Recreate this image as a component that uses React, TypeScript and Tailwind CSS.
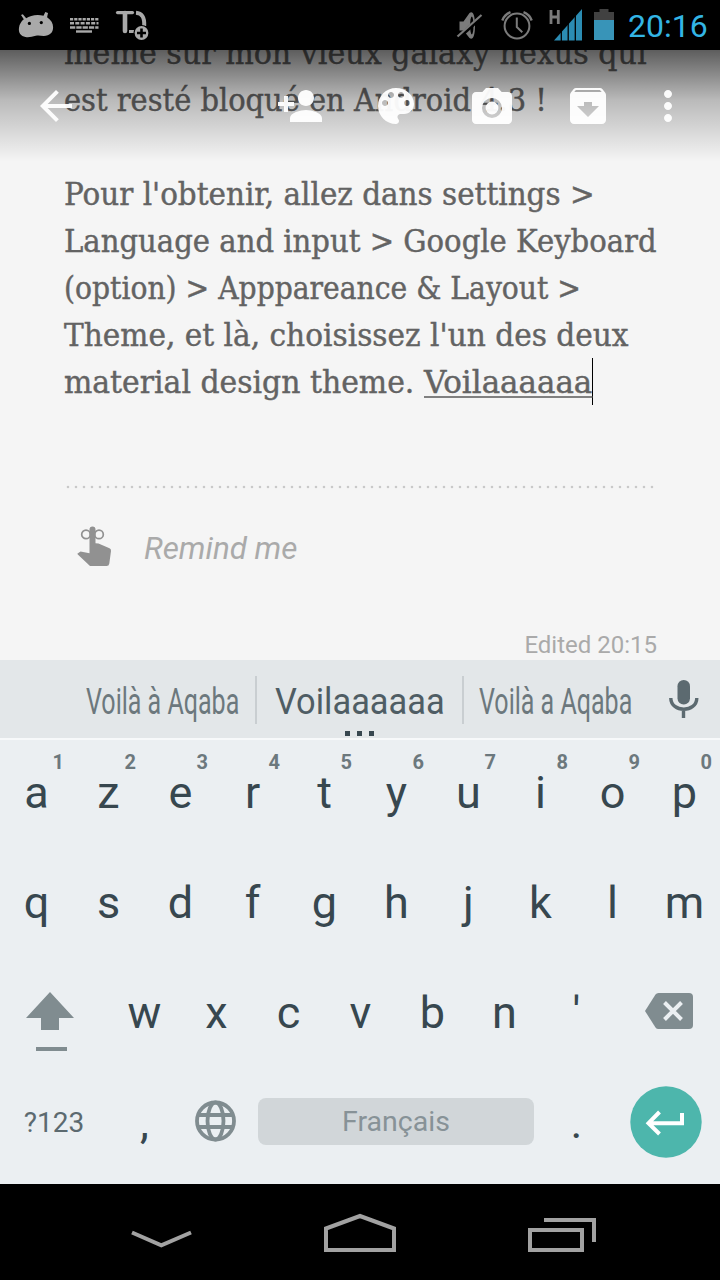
import type { ReactNode } from 'react';

function MdIcon({ d, className }: { d: string; className: string }) {
  return (
    <svg viewBox="0 0 24 24" className={className} fill="currentColor" fillRule="evenodd">
      <path d={d} />
    </svg>
  );
}

const ICONS = {
  back: 'M20 11H7.83l5.59-5.59L12 4l-8 8 8 8 1.41-1.41L7.83 13H20v-2z',
  personAdd:
    'M15 12c2.21 0 4-1.79 4-4s-1.79-4-4-4-4 1.79-4 4 1.79 4 4 4zm-9-2V7H4v3H1v2h3v3h2v-3h3v-2H6zm9 4c-2.67 0-8 1.34-8 4v2h16v-2c0-2.66-5.33-4-8-4z',
  palette:
    'M12 3c-4.97 0-9 4.03-9 9s4.03 9 9 9c.83 0 1.5-.67 1.5-1.5 0-.39-.15-.74-.39-1.01-.23-.26-.38-.61-.38-.99 0-.83.67-1.5 1.5-1.5H16c2.76 0 5-2.24 5-5 0-4.42-4.03-8-9-8zm-5.5 9c-.83 0-1.5-.67-1.5-1.5S5.67 9 6.5 9 8 9.67 8 10.5 7.33 12 6.5 12zm3-4C8.67 8 8 7.33 8 6.5S8.67 5 9.5 5s1.5.67 1.5 1.5S10.33 8 9.5 8zm5 0c-.83 0-1.5-.67-1.5-1.5S13.67 5 14.5 5s1.5.67 1.5 1.5S15.33 8 14.5 8zm3 4c-.83 0-1.5-.67-1.5-1.5S16.67 9 17.5 9s1.5.67 1.5 1.5-.67 1.5-1.5 1.5z',
  camera:
    'M9 3L7.17 5H4c-1.1 0-2 .9-2 2v12c0 1.1.9 2 2 2h16c1.1 0 2-.9 2-2V7c0-1.1-.9-2-2-2h-3.17L15 3H9zm3 15a5 5 0 1 1 0-10 5 5 0 0 1 0 10zM12 9.8a3.2 3.2 0 1 0 0 6.4 3.2 3.2 0 0 0 0-6.4z',
  archive:
    'M20.54 5.23l-1.39-1.68C18.88 3.21 18.47 3 18 3H6c-.47 0-.88.21-1.16.55L3.46 5.23C3.17 5.57 3 6.02 3 6.5V19c0 1.1.9 2 2 2h14c1.1 0 2-.9 2-2V6.5c0-.48-.17-.93-.46-1.27zM12 17.5L6.5 12H10v-2h4v2h3.5L12 17.5zM5.12 5l.81-1h12l.94 1H5.12z',
  more: 'M12 8c1.1 0 2-.9 2-2s-.9-2-2-2-2 .9-2 2 .9 2 2 2zm0 2c-1.1 0-2 .9-2 2s.9 2 2 2 2-.9 2-2-.9-2-2-2zm0 6c-1.1 0-2 .9-2 2s.9 2 2 2 2-.9 2-2-.9-2-2-2z',
};

function StatusBar() {
  return (
    <header className="flex h-[50px] shrink-0 items-start bg-black">
      <svg viewBox="0 0 240 50" className="h-[50px] w-[240px]">
        <g fill="#a9a9a9">
          <path d="M21 15l1.800-.8 3.400 4C30 15.500 37 14 43.500 15.700l1.800-3.700 2.700 1-.9 4.300c4 2.700 6 6 6 10.200 0 5.200-3.500 8.300-9.300 8.400-3 0-5.200-.7-8-.1-3.800.8-6.500 2-10.300 1.300-4.600-.9-7.300-4.300-6.500-9.300.4-3.300 2-6.200 4.800-8.500z" />
          <circle cx="29.400" cy="23.400" r="1.600" fill="#000" />
          <circle cx="41.300" cy="22.600" r="1.600" fill="#000" />
        </g>
        <g stroke="#a9a9a9" strokeWidth="2.400" fill="none">
          <path d="M70 19.200H98.500" strokeDasharray="3.200 1" />
          <path d="M70 23.300H98.500" strokeDasharray="4 1.300" />
          <path d="M70 27.500H98.500" strokeDasharray="5.300 1" />
          <path d="M76 31.500H92" />
        </g>
        <g fill="none" stroke="#a9a9a9" strokeLinecap="round">
          <path d="M117.500 12.600H132.500" strokeWidth="3.200" />
          <path d="M125 13V31" strokeWidth="4.600" />
          <path d="M136 12.800C142.500 13.200 144.600 17.500 144.200 26" strokeWidth="4" strokeLinecap="butt" />
          <path d="M129 31.500H134" strokeWidth="3" strokeLinecap="butt" />
        </g>
        <circle cx="141.500" cy="33" r="8" fill="#000" />
        <circle cx="141.500" cy="33" r="6.900" fill="#a9a9a9" />
        <path d="M137 33H146M141.500 28.500V37.500" stroke="#000" strokeWidth="2.600" />
      </svg>
      <svg viewBox="440 0 180 50" className="ml-auto h-[50px] w-[180px]">
        <path d="M459.500 21.500h4l6-8.500c3-2.500 5.500 1 5.500 12.500s-2.500 15-5.500 12.500l-6-7.500h-4z" fill="#7b7b7b" />
        <ellipse cx="471.800" cy="25.500" rx="1.700" ry="9" fill="#000" />
        <path d="M458.500 37.500L482.500 16" stroke="#000" strokeWidth="4" />
        <path d="M457.500 36.500L481.500 15" stroke="#7b7b7b" strokeWidth="2.200" />
        <g fill="none" stroke="#7b7b7b" strokeWidth="2">
          <circle cx="517" cy="26" r="12.400" />
          <path d="M516.800 17.500V27L522.300 32.300" />
          <path d="M502.300 20.500Q504.500 14.500 510.500 12.200M523.500 12.200Q529.500 14.500 531.700 20.500" strokeWidth="2.400" />
        </g>
        <path d="M551 10V24M558.300 10V24M551 17H558.300" stroke="#7b7b7b" strokeWidth="2.800" fill="none" />
        <path d="M554 40.500L582 9V40.500z" fill="#2b8cb3" />
        <path d="M561.300 10V41M568.200 10V41M575.300 10V41" stroke="#000" strokeWidth="1.300" />
        <path d="M594 12h5.500v-3h9v3h5.500v8h-20z" fill="#414141" />
        <path d="M594 20h20v20h-20z" fill="#3894b8" />
      </svg>
      <time className="mr-[11px] ml-[8px] w-[81px] text-[32px] leading-[52px] whitespace-nowrap text-[#33b5e5]">20:16</time>
    </header>
  );
}

function NoteLine({ children, className = '' }: { children?: ReactNode; className?: string }) {
  return (
    <div className="h-[47px] whitespace-nowrap">
      <span className={`inline-block origin-left ${className}`}>{children}</span>
    </div>
  );
}

function Note() {
  return (
    <main className="relative flex h-[610px] shrink-0 flex-col overflow-hidden bg-[#f5f5f5] px-16">
      <article className="-mt-[20px] shrink-0 font-['Roboto_Slab','DejaVu_Serif_Condensed','DejaVu_Serif',serif] text-[31px] leading-[47px] font-normal text-[#636363] [-webkit-text-stroke:0.4px_#636363] [font-stretch:condensed]">
        <NoteLine className="scale-x-[1.08]">même sur mon vieux galaxy nexus qui</NoteLine>
        <NoteLine className="scale-x-[1.037]">est resté bloqué en Android 4.3 !</NoteLine>
        <NoteLine />
        <NoteLine className="scale-x-[1.056]">Pour l'obtenir, allez dans settings &gt;</NoteLine>
        <NoteLine className="scale-x-[1.044]">Language and input &gt; Google Keyboard</NoteLine>
        <NoteLine className="scale-x-[1.012]">(option) &gt; Apppareance &amp; Layout &gt;</NoteLine>
        <NoteLine className="scale-x-[1.062]">Theme, et là, choisissez l'un des deux</NoteLine>
        <div className="flex h-[47px] whitespace-nowrap">
          <span className="w-[360px] shrink-0">
            <span className="inline-block origin-left scale-x-[1.071]">material design theme.</span>
          </span>
          <span className="w-[168px] shrink-0">
            <span className="inline-block origin-left scale-x-[1.11] underline decoration-[#808080] decoration-2 underline-offset-[3px]">
              Voilaaaaaa
            </span>
          </span>
          <span className="-mt-px h-[47px] w-px shrink-0 bg-black" />
        </div>
      </article>
      <svg viewBox="0 0 592 4" className="mt-[79px] h-1 w-[592px] shrink-0">
        <path d="M4 2H590" stroke="#c9c9c9" strokeWidth="2.600" strokeLinecap="round" strokeDasharray="0 8" />
      </svg>
      <div className="mt-[35px] flex h-12 shrink-0 items-center">
        <svg viewBox="0 0 40 44" className="-mt-[5px] ml-[11px] h-11 w-10" fill="#919191">
          <path d="M14.500 5.500a3 3 0 0 1 6 0V19.200l3 .2 11 4.900q1.700.8 1.500 2.700L34.300 39.500q-.3 2.500-2.800 2.500H15L2.800 30.600 2.300 29.800 5.500 27.600 14.500 29.300z" />
          <g fill="none" stroke="#919191" strokeWidth="1.700">
            <circle cx="11" cy="10.400" r="4.300" />
            <circle cx="24" cy="10.400" r="4.300" />
          </g>
        </svg>
        <span className="ml-[29px] origin-left scale-x-[0.98] text-[32px] leading-none text-[#aaaaaa] italic">Remind me</span>
      </div>
      <p className="-mr-px mt-[59px] self-end text-[24px] leading-[28px] text-[#aaaaaa]">Edited 20:15</p>

      <nav className="absolute inset-x-0 top-0 flex h-[112px] items-start bg-linear-to-b from-black/62 via-black/24 via-45% to-transparent px-8 pt-8 pr-7 text-white/95">
        <MdIcon d={ICONS.back} className="size-12" />
        <MdIcon d={ICONS.personAdd} className="ml-auto size-12" />
        <MdIcon d={ICONS.palette} className="ml-12 size-12" />
        <MdIcon d={ICONS.camera} className="ml-12 size-12" />
        <MdIcon d={ICONS.archive} className="ml-12 size-12" />
        <MdIcon d={ICONS.more} className="ml-8 size-12" />
      </nav>
    </main>
  );
}

function Suggestions() {
  return (
    <section className="flex h-[80px] shrink-0 items-start border-b-2 border-[#f7f9fa] bg-[#e3e7e9] text-[36px] leading-[42px] whitespace-nowrap text-[#6c787d]">
      <div className="flex h-[78px] w-[255px] items-start pt-[21px] pl-[86px]">
        <span className="origin-left scale-x-[0.695]">Voilà à Aqaba</span>
      </div>
      <div className="mt-4 h-12 w-[2px] shrink-0 bg-[#c9ced1]" />
      <div className="flex h-[78px] w-[205px] shrink-0 flex-col items-center pt-[21px] text-[#4f5d64]">
        <span className="scale-x-[0.955]">Voilaaaaaa</span>
        <div className="mt-[8px] flex gap-[7px]">
          <i className="size-[5px] bg-[#37474f]" />
          <i className="size-[5px] bg-[#37474f]" />
          <i className="size-[5px] bg-[#37474f]" />
        </div>
      </div>
      <div className="mt-4 h-12 w-[2px] shrink-0 bg-[#c9ced1]" />
      <div className="w-[184px] shrink-0 pt-[21px] pl-[15px]">
        <span className="inline-block origin-left scale-x-[0.695]">Voilà a Aqaba</span>
      </div>
      <svg viewBox="0 0 32 42" className="mt-[19px] ml-[20px] h-[42px] w-8 shrink-0">
        <rect x="9.500" y="1" width="12.500" height="24.500" rx="6.200" fill="#5c6a70" />
        <path d="M3 19C3 34 29 34 29 19M15.700 30V39" transform="translate(-.2 0)" fill="none" stroke="#5c6a70" strokeWidth="3.400" />
      </svg>
    </section>
  );
}

function Key({ label, hint }: { label: string; hint?: string }) {
  return (
    <div className="relative flex h-[110px] w-[72px] items-start justify-center pt-[26px] pl-px text-[45px] leading-[54px] text-[#37474f]">
      {label}
      {hint && (
        <span className="absolute top-[10px] right-[8px] text-[20px] leading-[24px] font-bold text-[#6c787d]">{hint}</span>
      )}
    </div>
  );
}

function Keyboard() {
  return (
    <section className="flex h-[444px] shrink-0 flex-col bg-[#ebeff2]">
      <div className="flex">
        {[...'azertyuiop'].map((c, i) => (
          <Key key={c} label={c} hint={String((i + 1) % 10)} />
        ))}
      </div>
      <div className="flex">
        {[...'qsdfghjklm'].map((c) => (
          <Key key={c} label={c} />
        ))}
      </div>
      <div className="flex">
        <svg viewBox="0 0 108 110" className="h-[110px] w-[108px]" fill="#808c90">
          <path d="M50 32L74 58H59V70H41V58H26z" />
          <path d="M36 87H67V91H36z" />
        </svg>
        {[..."wxcvbn'"].map((c) => (
          <Key key={c} label={c} />
        ))}
        <svg viewBox="0 0 108 110" className="h-[110px] w-[108px]">
          <path d="M33 51L43.500 34.500Q44.500 33 46.500 33H77Q81 33 81 37V65Q81 69 77 69H46.500Q44.500 69 43.500 67.500z" fill="#808c90" />
          <path d="M52.500 42.500L69.500 59.500M69.500 42.500L52.500 59.500" stroke="#ebeff2" strokeWidth="4" />
        </svg>
      </div>
      <div className="flex items-start">
        <div className="w-[108px] pt-[36px] text-center text-[28px] leading-[34px] text-[#5c6a70]">?123</div>
        <Key label="," />
        <svg viewBox="0 0 72 110" className="h-[110px] w-[72px]" fill="none" stroke="#808c90" strokeWidth="3.800">
          <circle cx="35.500" cy="51" r="18.500" />
          <ellipse cx="35.500" cy="51" rx="8" ry="18.500" />
          <path d="M18 45H53M18 57H53" />
        </svg>
        <div className="mt-[28px] ml-[6px] h-[47px] w-[276px] rounded-lg bg-[#d1d6d9] text-center text-[28.500px] leading-[47px] text-[#879297]">
          Français
        </div>
        <div className="ml-[6px]">
          <Key label="." />
        </div>
        <svg viewBox="0 0 72 72" className="mt-[16px] ml-[18px] size-[72px]">
          <circle cx="36" cy="36" r="35.700" fill="#4db6ac" />
          <path d="M29.500 26L18.500 37.200L29.500 48M18.500 37.200H52V27" fill="none" stroke="#fff" strokeWidth="4" />
        </svg>
      </div>
    </section>
  );
}

function NavBar() {
  return (
    <footer className="h-[96px] shrink-0 bg-black">
      <svg viewBox="0 1184 720 96" className="h-[96px] w-full" fill="none" stroke="#a2a2a2" strokeWidth="4">
        <path d="M132 1232.500L161.300 1245.300L191 1232.500" />
        <path d="M326 1228.500V1250H394V1228.500L360 1216z" />
        <path d="M530 1230H582V1250H530zM544 1220H594V1242" />
      </svg>
    </footer>
  );
}

export default function App() {
  return (
    <div className="flex h-[1280px] w-[720px] flex-col overflow-hidden bg-black font-[Roboto,sans-serif]">
      <StatusBar />
      <Note />
      <Suggestions />
      <Keyboard />
      <NavBar />
    </div>
  );
}
